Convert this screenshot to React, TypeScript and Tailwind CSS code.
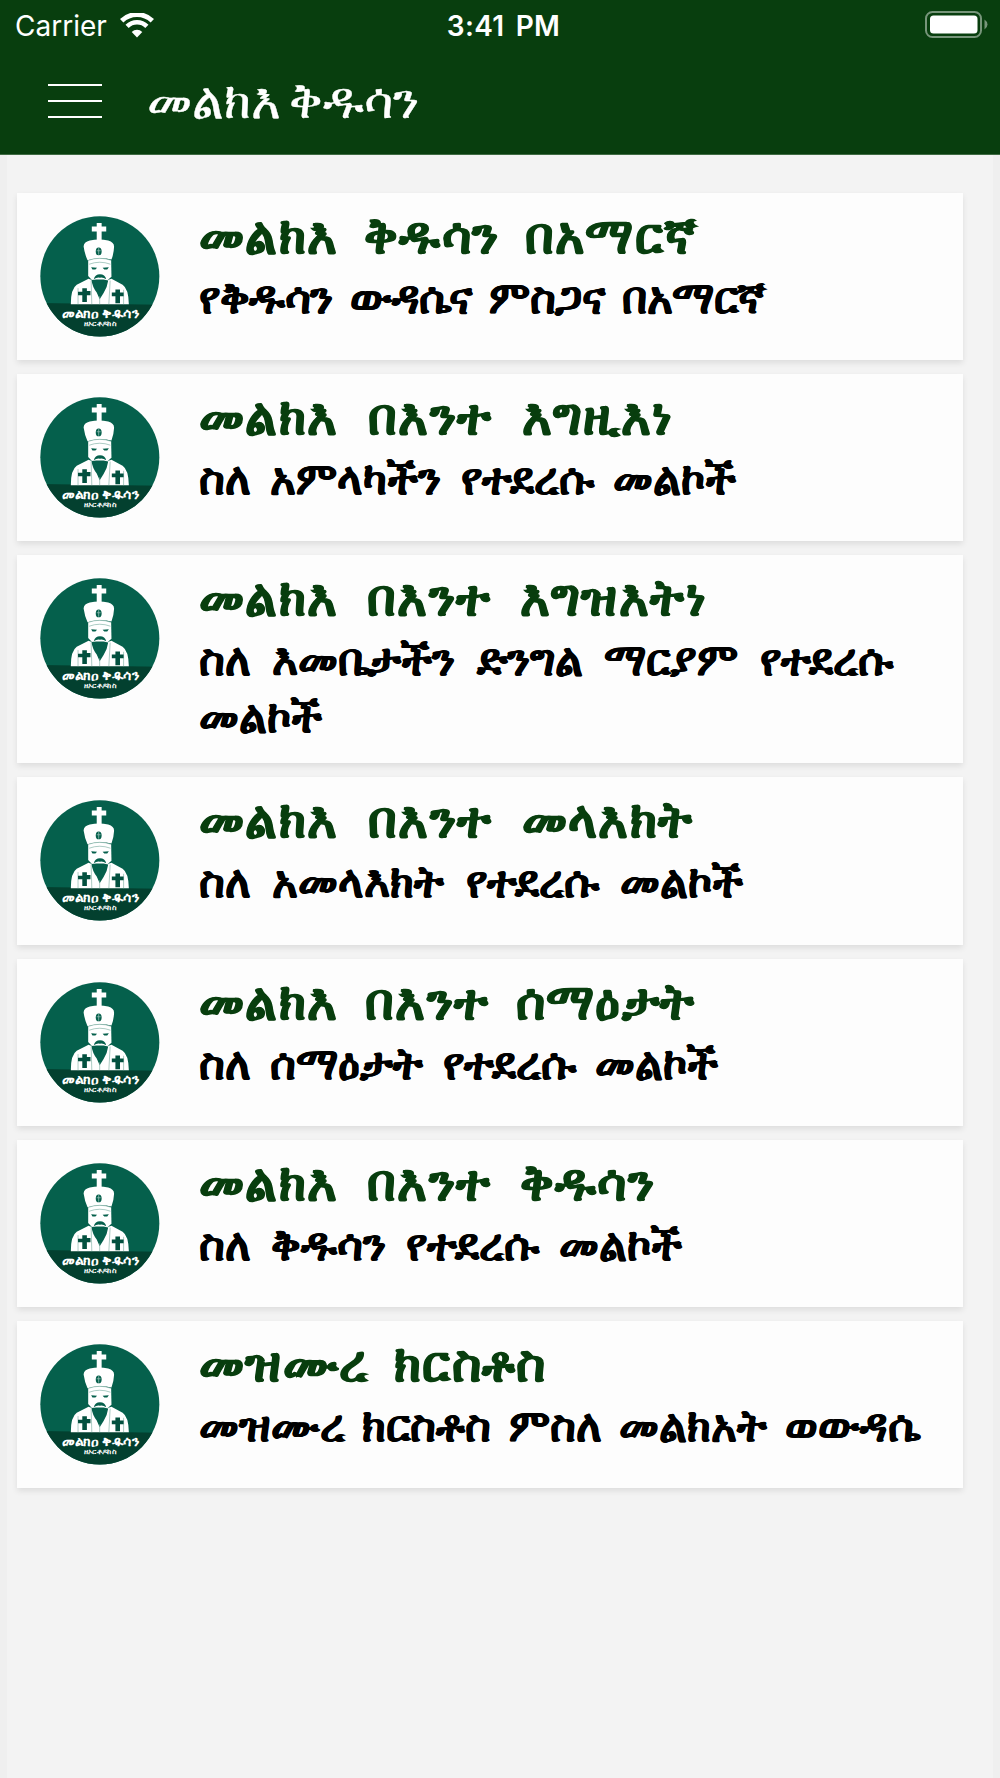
import React from 'react';

const items = [
  { title: 'መልክእ ቅዱሳን በአማርኛ', text: 'የቅዱሳን ውዳሴና ምስጋና በአማርኛ', titleGap: '[word-spacing:12px]', textGap: '[word-spacing:8px] tracking-[-0.5px]' },
  { title: 'መልክእ በእንተ እግዚእነ', text: 'ስለ አምላካችን የተደረሱ መልኮች', titleGap: '[word-spacing:16px]', textGap: '[word-spacing:9px]' },
  { title: 'መልክእ በእንተ እግዝእትነ', text: 'ስለ እመቤታችን ድንግል ማርያም የተደረሱ መልኮች', titleGap: '[word-spacing:15px]', textGap: '[word-spacing:11px]' },
  { title: 'መልክእ በእንተ መላእክት', text: 'ስለ አመላእክት የተደረሱ መልኮች', titleGap: '[word-spacing:16px]', textGap: '[word-spacing:11px]' },
  { title: 'መልክእ በእንተ ሰማዕታት', text: 'ስለ ሰማዕታት የተደረሱ መልኮች', titleGap: '[word-spacing:13px]', textGap: '[word-spacing:9px]' },
  { title: 'መልክእ በእንተ ቅዱሳን', text: 'ስለ ቅዱሳን የተደረሱ መልኮች', titleGap: '[word-spacing:15px]', textGap: '[word-spacing:9.5px]' },
  { title: 'መዝሙረ ክርስቶስ', text: 'መዝሙረ ክርስቶስ ምስለ መልክአት ወውዳሴ', titleGap: '[word-spacing:12px]', textGap: '[word-spacing:7px]' },
];

const Logo: React.FC = () => (
  <svg className="w-[120px] h-[121px] mt-px ml-px shrink-0" viewBox="116 105 366 369">
    <defs>
      <clipPath id="disc">
        <ellipse cx="298.500" cy="289" rx="181.500" ry="183.500" />
      </clipPath>
    </defs>
    <g clipPath="url(#disc)">
      <rect x="116" y="105" width="366" height="369" fill="#05604c" />
      <path d="M110 370 L490 376 V480 H110 Z" fill="#03402f" />
      {/* Cross */}
      <path d="M289 126 h15 v11 h14 v15 h-14 v28 h-15 v-28 h-15 v-15 h15 z" fill="#fff" />
      {/* Crown */}
      <path d="M249 198 Q249 185 268 180 Q296 173 324 180 Q342 185 342 199 Q341 220 334 238 Q298 229 261 240 Q252 220 249 198 Z" fill="#fff" />
      <ellipse cx="295" cy="213" rx="9" ry="12" fill="#05604c" />
      <path d="M295 203 v20 M289 211 h12" stroke="#8fbcb0" strokeWidth="2.500" />
      {/* Face */}
      <path d="M263 240 Q298 228 333 240 L334 290 L318 304 L278 304 L263 288 Z" fill="#fff" />
      <path d="M264 240 Q298 228 333 240 M266 252 Q298 240 331 252" stroke="#7fb0a4" strokeWidth="2" fill="none" />
      <path d="M272 261 l18 2 l-5 5 h-9 z M307 263 l19 -2 l-5 7 h-9 z" fill="#05604c" />
      <path d="M280 298 Q284 283 299 283 Q314 283 318 298 Q308 291 299 293 Q289 291 280 298 Z" fill="#05604c" />
      {/* Robe */}
      <path d="M210 374 Q210 327 228 315 L264 296 L278 302 L318 302 L334 296 L368 315 Q386 327 387 374 Z" fill="#fff" />
      <path d="M273 300 L288 299 L310 299 L324 302 Q321 324 310 340 L298 359 L289 338 Q276 322 273 300 Z" fill="#05604c" />
      <path d="M298 350 V374 M272 302 L274 374 M330 302 L326 374 M232 325 V374 M371 330 V374" stroke="#7fb0a4" strokeWidth="2" fill="none" />
      <path d="M245 325 h14 v9 h11 v13 h-11 v20 h-14 v-20 h-13 v-11 h13 z M346 329 h14 v9 h11 v12 h-11 v21 h-14 v-21 h-11 v-12 h11 z" fill="#03503f" />
    </g>
    <text x="301" y="416" textAnchor="middle" fill="#fff" textLength="238" lengthAdjust="spacingAndGlyphs" className="font-['Inter',sans-serif] font-bold text-[40px]">
      መልክዐ ቅዱሳን
    </text>
    <text x="299" y="442" textAnchor="middle" fill="#fff" textLength="98" lengthAdjust="spacingAndGlyphs" className="font-['Inter',sans-serif] font-bold text-[22px]">
      ዘኦርቶዶክስ
    </text>
  </svg>
);

const StatusBar: React.FC = () => (
  <div className="h-[50px] grid grid-cols-3 items-center pl-[15px] pr-3 text-[28px] leading-none">
    <div className="flex items-center gap-[13px] pt-px">
      <span>Carrier</span>
      <svg className="w-[34px] h-[25px]" viewBox="0 0 34 25" fill="none">
        <path d="M1.700 7.700 A22 22 0 0 1 32.300 7.700" stroke="#fff" strokeWidth="4.800" />
        <path d="M7.100 13.300 A14 14 0 0 1 26.900 13.300" stroke="#fff" strokeWidth="4.500" />
        <path d="M17 24.500 L11.700 19 A7.600 7.600 0 0 1 22.300 19 Z" fill="#fff" />
      </svg>
    </div>
    <span className="pl-1 pt-px text-center font-semibold tracking-[0.3px] [word-spacing:4px]">3:41 PM</span>
    <svg className="w-[63px] h-[28px] justify-self-end" viewBox="0 0 63 28" fill="none">
      <rect x="1" y="1" width="55" height="25" rx="6.500" stroke="#fff" strokeOpacity=".45" strokeWidth="2" />
      <rect x="5" y="4.500" width="47.500" height="18" rx="3.500" fill="#fff" />
      <path d="M59.500 8.500 Q62.500 10.500 62.500 13.500 Q62.500 16.500 59.500 18.500 Z" fill="#fff" fillOpacity=".45" />
    </svg>
  </div>
);

export default function App() {
  return (
    <div className="min-h-[1778px] flex flex-col bg-[#f3f3f3] font-['Inter',sans-serif]">
      <header className="h-[155px] bg-[#083e0e] border-b border-[#3f6b43] text-white">
        <StatusBar />
        <div className="flex items-center pl-[48px] h-[101px]">
          <button className="flex flex-col gap-[14px]" aria-label="Menu">
            <span className="w-[54px] h-[2px] bg-white" />
            <span className="w-[54px] h-[2px] bg-white" />
            <span className="w-[54px] h-[2px] bg-white" />
          </button>
          <h1 className="ml-[45px] pt-px text-[49.500px] leading-none [word-spacing:-6px] [-webkit-text-stroke:0.4px_white]">መልክእ ቅዱሳን</h1>
        </div>
      </header>

      <main className="flex-1 border-x-[7px] border-[#efefef] pt-[38px] pl-[10px] pr-[30px] flex flex-col gap-[14px]">
        {items.map((item) => (
          <article key={item.title} className="flex min-h-[167.200px] bg-[#fdfdfd] pl-[22px] pt-[17px] pb-[18px] shadow-[0_3px_6px_rgba(0,0,0,0.09)]">
            <div className="pt-[5px]">
              <Logo />
            </div>
            <div className="ml-[39px] flex-1 font-bold">
              <h2 className={`text-[50px] leading-[50px] tracking-[1.4px] text-[#083e0e] [-webkit-text-stroke:1px_#083e0e] ${item.titleGap}`}>{item.title}</h2>
              <p className={`pt-[9px] text-[44px] leading-[57px] text-black [-webkit-text-stroke:0.5px_black] ${item.textGap}`}>{item.text}</p>
            </div>
          </article>
        ))}
      </main>
    </div>
  );
}
